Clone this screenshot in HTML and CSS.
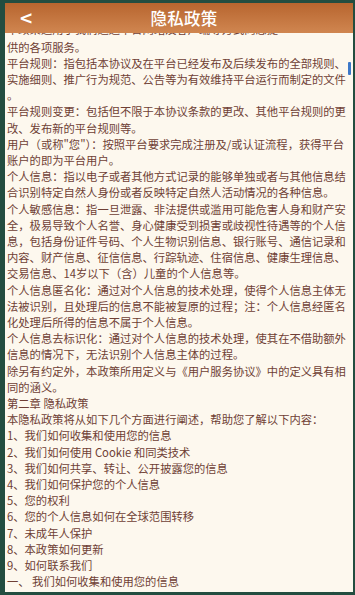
FILE: index.html
```html
<!DOCTYPE html>
<html lang="zh-CN">
<head>
<meta charset="utf-8">
<title>隐私政策</title>
<link rel="stylesheet" href="styles.css">
</head>
<body>
<div class="frame">
  <div class="screen">
    <header class="topbar">
      <span class="back">&lt;</span>
      <h1 class="title">隐私政策</h1>
    </header>
    <main class="content">
      <div class="scroll">
        <p class="cut">本政策适用于我们通过平台网站及客户端等方式向您提</p>
        <p>供的各项服务。</p>
        <p>平台规则：指包括本协议及在平台已经发布及后续发布的全部规则、<br>实施细则、推广行为规范、公告等为有效维持平台运行而制定的文件<br>。</p>
        <p>平台规则变更：包括但不限于本协议条款的更改、其他平台规则的更<br>改、发布新的平台规则等。</p>
        <p>用户（或称"您"）：按照平台要求完成注册及/或认证流程，获得平台<br>账户的即为平台用户。</p>
        <p>个人信息：指以电子或者其他方式记录的能够单独或者与其他信息结<br>合识别特定自然人身份或者反映特定自然人活动情况的各种信息。</p>
        <p>个人敏感信息：指一旦泄露、非法提供或滥用可能危害人身和财产安<br>全，极易导致个人名誉、身心健康受到损害或歧视性待遇等的个人信<br>息，包括身份证件号码、个人生物识别信息、银行账号、通信记录和<br>内容、财产信息、征信信息、行踪轨迹、住宿信息、健康生理信息、<br>交易信息、14岁以下（含）儿童的个人信息等。</p>
        <p>个人信息匿名化：通过对个人信息的技术处理，使得个人信息主体无<br>法被识别，且处理后的信息不能被复原的过程；注：个人信息经匿名<br>化处理后所得的信息不属于个人信息。</p>
        <p>个人信息去标识化：通过对个人信息的技术处理，使其在不借助额外<br>信息的情况下，无法识别个人信息主体的过程。</p>
        <p>除另有约定外，本政策所用定义与《用户服务协议》中的定义具有相<br>同的涵义。</p>
        <p>第二章 隐私政策</p>
        <p>本隐私政策将从如下几个方面进行阐述，帮助您了解以下内容：</p>
        <p>1、我们如何收集和使用您的信息</p>
        <p>2、我们如何使用 Cookie 和同类技术</p>
        <p>3、我们如何共享、转让、公开披露您的信息</p>
        <p>4、我们如何保护您的个人信息</p>
        <p>5、您的权利</p>
        <p>6、您的个人信息如何在全球范围转移</p>
        <p>7、未成年人保护</p>
        <p>8、本政策如何更新</p>
        <p>9、如何联系我们</p>
        <p>一、 我们如何收集和使用您的信息</p>
        <p>在您使用平台服务时，我们需要/可能需要收集和使用您的个人信息</p>
      </div>
      <span class="scrollbar"></span>
    </main>
  </div>
</div>
</body>
</html>
```
FILE: styles.css
```css
* { box-sizing: border-box; }
html, body { margin: 0; height: 100%; }
body {
  background: #234d40;
  font-family: "Noto Sans CJK SC", "Noto Sans", sans-serif;
}
.frame {
  height: 595px;
  padding: 3px 2px 3px 5px;
}
.screen {
  height: 100%;
  display: flex;
  flex-direction: column;
  overflow: hidden;
}
.topbar {
  flex: 0 0 30px;
  display: flex;
  align-items: center;
  padding: 0 0 0 14px;
  background: linear-gradient(#b7652f, #d08650);
  color: #fff;
}
.back {
  width: 30px;
  font-size: 17px;
  font-weight: bold;
  font-family: "DejaVu Sans", sans-serif;
}
.title {
  flex: 1;
  margin: 0;
  text-align: center;
  font-size: 16.5px;
  font-weight: 500;
  letter-spacing: 0.3px;
  padding-right: 34px;
}
.content {
  flex: 1;
  position: relative;
  overflow: hidden;
  background: #fdf8ee;
}
.scroll {
  margin-top: -14.5px;
  padding-left: 2px;
  color: #6f3f35;
  font-size: 11.3px;
  line-height: 16.2px;
  white-space: nowrap;
}
.scroll p { margin: 0; }
.scroll .cut { line-height: 20px; }
.scrollbar {
  position: absolute;
  right: 2px;
  top: 29px;
  width: 3px;
  height: 13px;
  border-radius: 1px;
  background: #3c78c8;
}
```
